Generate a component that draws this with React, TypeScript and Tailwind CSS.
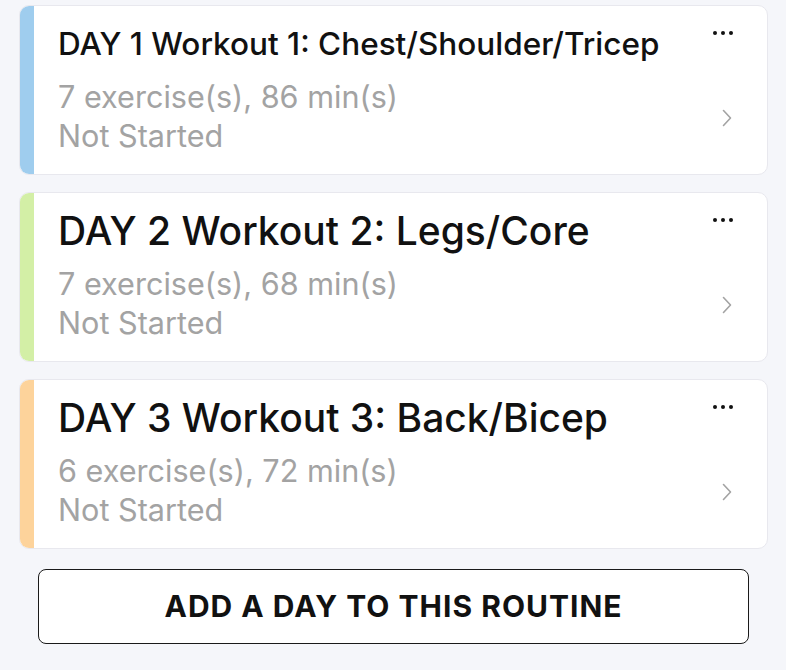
import React from "react";

const days = [
  { title: "DAY 1 Workout 1: Chest/Shoulder/Tricep", size: "text-[31.5px]", sub: "7 exercise(s), 86 min(s)", bar: "bg-[#9fcdee]" },
  { title: "DAY 2 Workout 2: Legs/Core", size: "text-[39px]", sub: "7 exercise(s), 68 min(s)", bar: "bg-[#d3efa6]" },
  { title: "DAY 3 Workout 3: Back/Bicep", size: "text-[39px]", sub: "6 exercise(s), 72 min(s)", bar: "bg-[#fdd39b]" },
];

function Dots() {
  return (
    <svg width="22" height="6" viewBox="0 0 22 6">
      <circle cx="3" cy="3" r="2" fill="#111" />
      <circle cx="11" cy="3" r="2" fill="#111" />
      <circle cx="19" cy="3" r="2" fill="#111" />
    </svg>
  );
}

function Chevron() {
  return (
    <svg width="10" height="18" viewBox="0 0 10 18">
      <path d="M1.5 1.5 L8.5 9 L1.5 16.5" fill="none" stroke="#a3a3a3" strokeWidth="1.6" strokeLinecap="round" strokeLinejoin="round" />
    </svg>
  );
}

export default function App() {
  return (
    <div
      className="w-[786px] h-[670px] bg-[#f5f6fa] pl-[19px] pr-[18px] pt-[5px] flex flex-col"
      style={{ fontFamily: 'Inter, "Liberation Sans", Arial, sans-serif' }}
    >
      <div className="flex flex-col gap-[17px]">
        {days.map((d) => (
          <div
            key={d.title}
            className="flex h-[170px] bg-white rounded-[10px] border border-[#e8e8ee] overflow-hidden"
          >
            <div className={`w-[14px] shrink-0 ${d.bar}`} />
            <div className="flex-1 pl-[24px] pt-[14px]">
              <div className={`${d.size} font-medium leading-[47px] text-[#111] whitespace-nowrap`}>{d.title}</div>
              <div className="mt-[10px] text-[30.6px] leading-[39px] text-[#a3a3a3]">
                <div>{d.sub}</div>
                <div>Not Started</div>
              </div>
            </div>
            <div className="w-[70px] shrink-0 flex flex-col items-end pr-[35px]">
              <div className="mt-[24px] -mr-[2px]">
                <Dots />
              </div>
              <div className="mt-[73px]">
                <Chevron />
              </div>
            </div>
          </div>
        ))}
      </div>
      <div className="mt-[20px] mx-[19px] h-[75px] rounded-[8px] border-[1.5px] border-[#1a1a1a] bg-white flex items-center justify-center">
        <span className="text-[30px] font-bold text-[#111] tracking-[1px]">ADD A DAY TO THIS ROUTINE</span>
      </div>
    </div>
  );
}
